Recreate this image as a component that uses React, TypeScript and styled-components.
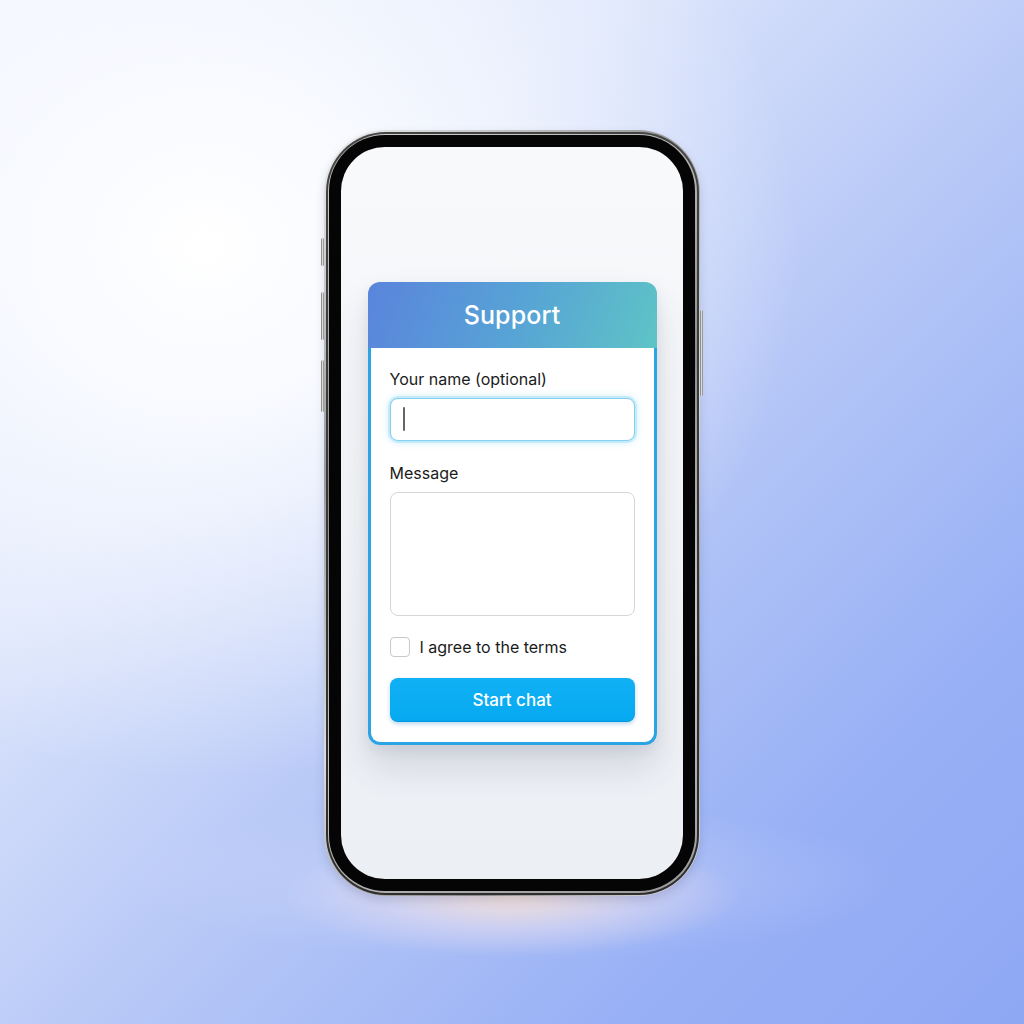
import React from "react";
import styled, { createGlobalStyle } from "styled-components";

const Global = createGlobalStyle`
  html, body { margin: 0; padding: 0; }
  body {
    width: 1024px;
    height: 1024px;
    overflow: hidden;
    font-family: Inter, "Noto Sans", "Liberation Sans", sans-serif;
  }
`;

const Stage = styled.div`
  width: 1024px;
  height: 1024px;
  display: flex;
  align-items: center;
  justify-content: center;
  background:
    radial-gradient(ellipse 230px 60px at 50% 87.5%, rgba(250, 226, 212, 0.85) 0%, rgba(236, 224, 238, 0.45) 55%, rgba(230, 230, 250, 0) 100%),
    radial-gradient(ellipse 380px 80px at 50% 86%, rgba(222, 226, 250, 0.4) 0%, rgba(222, 226, 250, 0) 100%),
    radial-gradient(ellipse 58% 52% at 20% 24%, #ffffff 0%, #f8faff 30%, rgba(246, 249, 254, 0) 100%),
    linear-gradient(135deg, #f2f5fe 0%, #dce5fb 30%, #b7c8f7 55%, #98b0f5 80%, #8fa8f4 100%);
`;

const Phone = styled.div`
  position: relative;
  width: 376px;
  height: 766px;
  box-sizing: border-box;
  border-radius: 62px;
  padding: 1.5px;
  background: linear-gradient(135deg, #eeeeee 0%, #9a9a9a 30%, #dcdcdc 55%, #8a8a8a 80%, #e2e2e2 100%);
  box-shadow: 0 5px 10px rgba(40, 50, 90, 0.16);
  margin-top: 2px;
`;

const Band = styled.div`
  width: 100%;
  height: 100%;
  box-sizing: border-box;
  border-radius: 60px;
  padding: 2px;
  background: linear-gradient(180deg, #444444, #2e2e2e);
`;

const Rim = styled.div`
  width: 100%;
  height: 100%;
  box-sizing: border-box;
  border-radius: 58px;
  padding: 1.5px;
  background: linear-gradient(160deg, #d4d4d4 0%, #8e8e8e 40%, #c8c8c8 70%, #9a9a9a 100%);
`;

const Bezel = styled.div`
  width: 100%;
  height: 100%;
  box-sizing: border-box;
  border-radius: 56px;
  padding: 12px;
  background: #050505;
`;

const Screen = styled.div`
  width: 100%;
  height: 100%;
  box-sizing: border-box;
  border-radius: 44px;
  overflow: hidden;
  background: linear-gradient(180deg, #f8f9fb 0%, #f3f5f8 50%, #eceff4 100%);
  display: flex;
  flex-direction: column;
  align-items: center;
  justify-content: center;
`;

const SideButton = styled.div<{ $side: "left" | "right"; $top: number; $h: number }>`
  position: absolute;
  ${(p) => (p.$side === "left" ? "left: -3px;" : "right: -3px;")}
  top: ${(p) => p.$top}px;
  width: 3px;
  height: ${(p) => p.$h}px;
  border-radius: 2px;
  background: linear-gradient(90deg, #6a6a6a, #dadada, #7a7a7a);
`;

const Card = styled.div`
  width: 289px;
  display: flex;
  flex-direction: column;
  border-radius: 12px;
  box-shadow: 0 22px 36px rgba(60, 70, 100, 0.16), 0 6px 12px rgba(60, 70, 100, 0.08);
`;

const Header = styled.div`
  height: 66px;
  border-radius: 12px 12px 0 0;
  background: linear-gradient(110deg, #5a84dc 0%, #57a2d6 50%, #5ec4c6 100%);
  display: flex;
  align-items: center;
  justify-content: center;
  color: #ffffff;
  font-size: 25px;
  font-weight: 500;
  letter-spacing: 0.1px;
  box-sizing: border-box;
`;

const Body = styled.div`
  background: #ffffff;
  border: 3px solid #2aa4e2;
  border-top: none;
  border-radius: 0 0 12px 12px;
  padding: 21px 19px 20px 19px;
  display: flex;
  flex-direction: column;
`;

const Label = styled.div<{ $gap: number }>`
  font-size: 16px;
  line-height: 20px;
  color: #1b1b1b;
  margin-top: ${(p) => p.$gap}px;
  margin-bottom: 9px;
`;

const Field = styled.div`
  height: 43px;
  box-sizing: border-box;
  border: 1.5px solid #86cfee;
  border-radius: 8px;
  background: #ffffff;
  box-shadow: 0 0 0 2px rgba(140, 215, 245, 0.35), 0 0 8px rgba(90, 200, 245, 0.45);
  display: flex;
  align-items: center;
  padding-left: 12px;
`;

const Caret = styled.span`
  width: 2px;
  height: 24px;
  background: #666;
  border-radius: 1px;
`;

const TextArea = styled.div`
  height: 124px;
  box-sizing: border-box;
  border: 1.5px solid #d6d6d6;
  border-radius: 8px;
  background: #ffffff;
`;

const CheckRow = styled.label`
  display: flex;
  align-items: center;
  gap: 10px;
  margin-top: 21px;
  font-size: 16px;
  color: #1b1b1b;
`;

const Box = styled.span`
  width: 20px;
  height: 20px;
  box-sizing: border-box;
  border: 1.5px solid #c9c9c9;
  border-radius: 4px;
  background: #fff;
`;

const Button = styled.button`
  margin-top: 21px;
  height: 44px;
  border: none;
  border-radius: 8px;
  background: linear-gradient(180deg, #11b0f5 0%, #06a9f0 100%);
  box-shadow: 0 2px 4px rgba(0, 110, 190, 0.28), inset 0 -1px 0 rgba(0, 100, 180, 0.25);
  color: #ffffff;
  font-family: Inter, "Noto Sans", "Liberation Sans", sans-serif;
  font-size: 17px;
  font-weight: 500;
  cursor: pointer;
`;

export default function App() {
  return (
    <Stage>
      <Global />
      <Phone>
        <SideButton $side="left" $top={108} $h={28} />
        <SideButton $side="left" $top={162} $h={48} />
        <SideButton $side="left" $top={230} $h={52} />
        <SideButton $side="right" $top={180} $h={86} />
        <Band>
          <Rim>
            <Bezel>
              <Screen>
                <Card>
                  <Header>Support</Header>
                  <Body>
                    <Label $gap={0}>Your name (optional)</Label>
                    <Field>
                      <Caret />
                    </Field>
                    <Label $gap={22}>Message</Label>
                    <TextArea />
                    <CheckRow>
                      <Box />
                      I agree to the terms
                    </CheckRow>
                    <Button>Start chat</Button>
                  </Body>
                </Card>
              </Screen>
            </Bezel>
          </Rim>
        </Band>
      </Phone>
    </Stage>
  );
}
